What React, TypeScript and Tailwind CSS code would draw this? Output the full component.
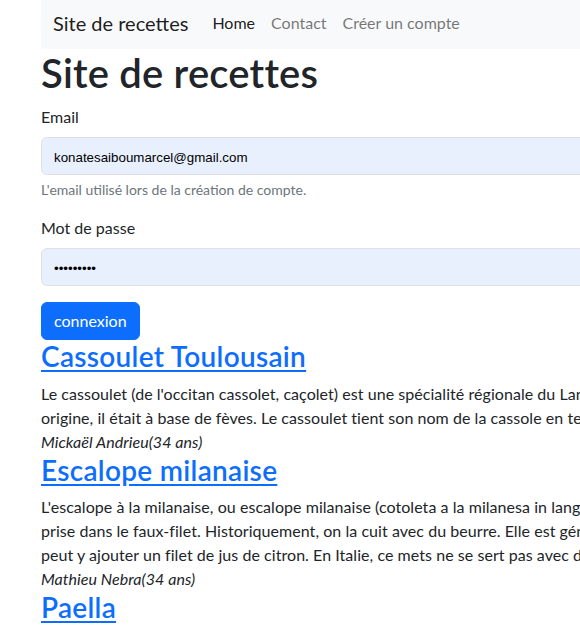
import type { ReactNode } from 'react';

type Recipe = {
  title: string;
  lines: string[];
  author: string;
};

const recipes: Recipe[] = [
  {
    title: 'Cassoulet Toulousain',
    lines: [
      "Le cassoulet (de l'occitan cassolet, caçolet) est une spécialité régionale du Languedoc, à base de haricots secs, généralement blancs, et de viande. À son",
      'origine, il était à base de fèves. Le cassoulet tient son nom de la cassole en terre cuite émaillée dans laquelle il est traditionnellement servi.',
    ],
    author: 'Mickaël Andrieu(34 ans)',
  },
  {
    title: 'Escalope milanaise',
    lines: [
      "L'escalope à la milanaise, ou escalope milanaise (cotoleta a la milanesa in langue lombarde), est une escalope de veau, panée à la farine, aux œufs et à la chapelure, et",
      'prise dans le faux-filet. Historiquement, on la cuit avec du beurre. Elle est généralement servie avec des pâtes ou des frites. On',
      'peut y ajouter un filet de jus de citron. En Italie, ce mets ne se sert pas avec des pâtes.',
    ],
    author: 'Mathieu Nebra(34 ans)',
  },
  {
    title: 'Paella',
    lines: [
      'La paella est une recette de cuisine espagnole, à base de riz rond, originaire de la région de Valence.',
    ],
    author: 'Laurène Castor(28 ans)',
  },
];

function Field({ label, children, help }: { label: string; children: ReactNode; help?: string }) {
  return (
    <div className="mb-4">
      <label className="mb-2 block text-[16px] leading-6">{label}</label>
      {children}
      {help && <div className="mt-1 text-[14px] leading-[21px] text-[#6c757d]">{help}</div>}
    </div>
  );
}

function FakeInput({ value }: { value: string }) {
  return (
    <div className="flex h-[38px] w-[900px] items-center rounded-[6px] border border-[#dee2e6] bg-[#e8f0fe] px-3 pt-[3px] font-['Liberation_Sans',Arial,sans-serif] text-[13.33px] text-black">
      {value}
    </div>
  );
}

export default function App() {
  return (
    <div className="h-[634px] w-[580px] overflow-hidden bg-white font-['Lato','Segoe_UI',sans-serif] text-[#212529]">
      <div className="w-[1000px] pl-[41px]">
        <nav className="flex h-[49px] items-center bg-[#f8f9fa] pb-[3px] pl-3">
          <span className="mr-4 text-[20px] leading-[30px] text-black/90">Site de recettes</span>
          <ul className="flex text-[16px] leading-6">
            <li className="px-2 text-black/90">Home</li>
            <li className="px-2 text-black/55">Contact</li>
            <li className="px-2 text-black/55">Créer un compte</li>
          </ul>
        </nav>

        <h1 className="mb-2 text-[40px] font-semibold leading-[48px] tracking-[0.2px]">Site de recettes</h1>

        <form>
          <Field label="Email" help="L'email utilisé lors de la création de compte.">
            <FakeInput value="konatesaiboumarcel@gmail.com" />
          </Field>
          <Field label="Mot de passe">
            <FakeInput value="•••••••••" />
          </Field>
          <button
            type="button"
            className="rounded-[6px] border border-[#0d6efd] bg-[#0d6efd] px-3 py-[6px] text-[16px] leading-6 text-white"
          >
            connexion
          </button>
        </form>

        {recipes.map((recipe) => (
          <article key={recipe.title}>
            <h3 className="mb-2 text-[28px] font-semibold leading-[33.6px] tracking-[0.3px]">
              <a href="#" className="text-[#0d6efd] underline underline-offset-[3px]">
                {recipe.title}
              </a>
            </h3>
            <div className="text-[16px] leading-6 tracking-[0.05px]">
              {recipe.lines.map((line) => (
                <div key={line} className="whitespace-nowrap">
                  {line}
                </div>
              ))}
            </div>
            <i className="block text-[16px] leading-6 tracking-[0.05px]">{recipe.author}</i>
          </article>
        ))}
      </div>
    </div>
  );
}
